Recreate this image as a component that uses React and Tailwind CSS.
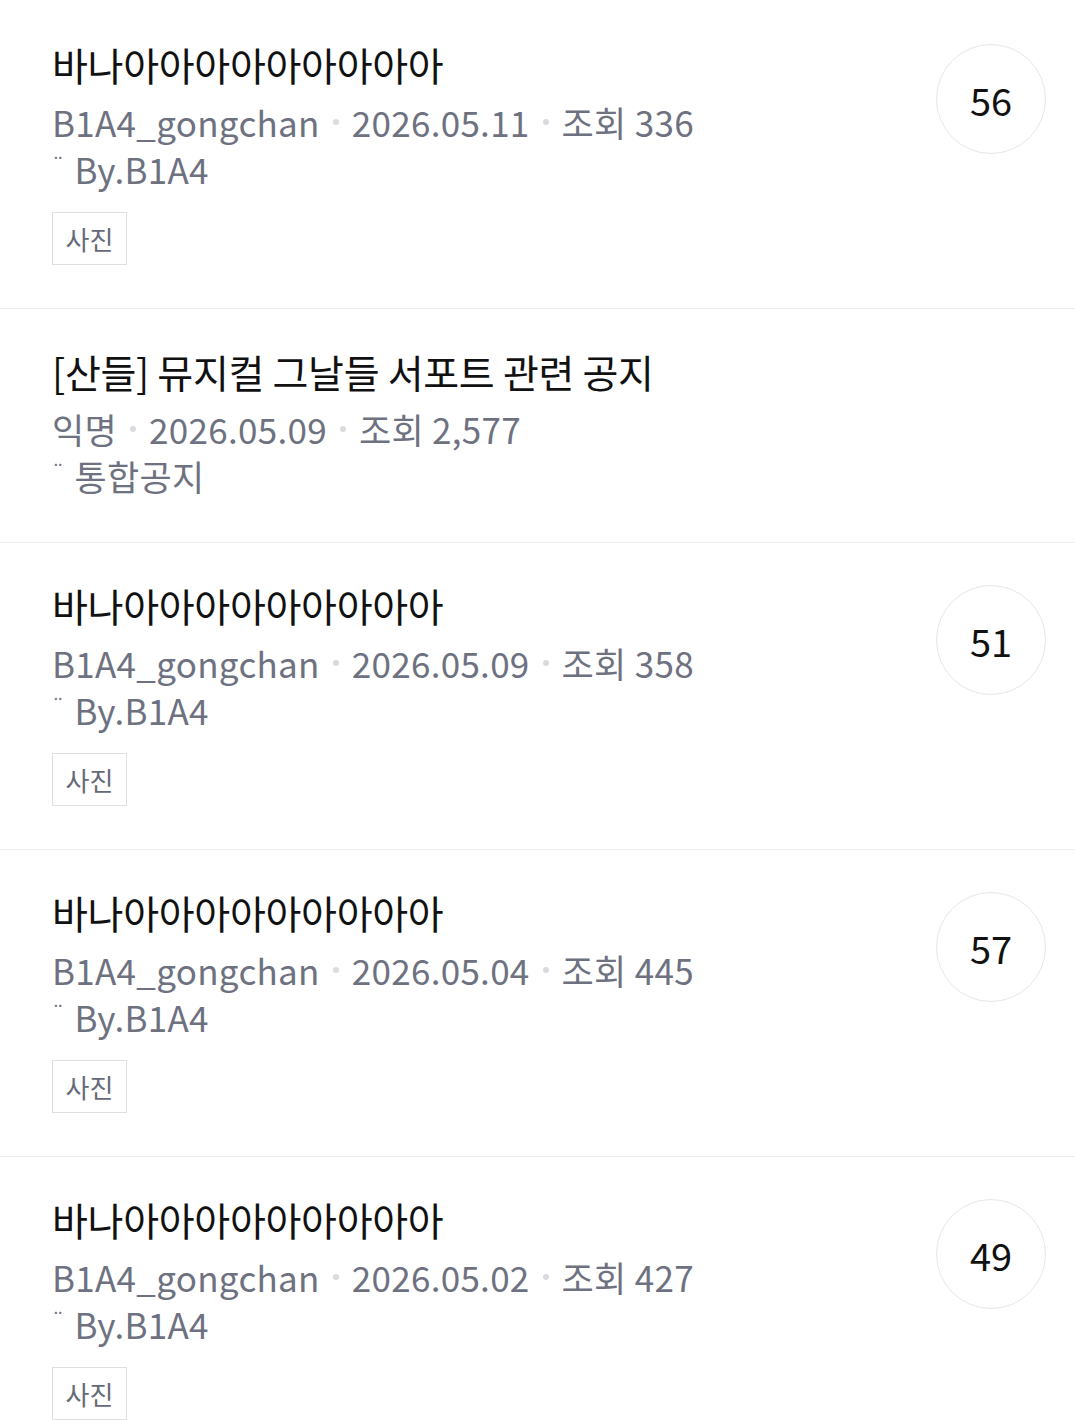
const posts = [
  { title: '바나아아아아아아아아아', author: 'B1A4_gongchan', date: '2026.05.11', views: '336', board: 'By.B1A4', tag: '사진', comments: 56 },
  { title: '[산들] 뮤지컬 그날들 서포트 관련 공지', author: '익명', date: '2026.05.09', views: '2,577', board: '통합공지' },
  { title: '바나아아아아아아아아아', author: 'B1A4_gongchan', date: '2026.05.09', views: '358', board: 'By.B1A4', tag: '사진', comments: 51 },
  { title: '바나아아아아아아아아아', author: 'B1A4_gongchan', date: '2026.05.04', views: '445', board: 'By.B1A4', tag: '사진', comments: 57 },
  { title: '바나아아아아아아아아아', author: 'B1A4_gongchan', date: '2026.05.02', views: '427', board: 'By.B1A4', tag: '사진', comments: 49 },
];

const Dot = () => <span className="mx-[13px] inline-block w-[6px] h-[6px] rounded-full bg-[#d9dbe0] align-middle" />;

export default function App() {
  return (
    <div className="bg-white w-[1075px] h-[1420px] overflow-hidden" style={{ fontFamily: '"Noto Sans CJK KR", "Noto Sans", sans-serif' }}>
      {posts.map((p, i) => (
        <div key={i} className={`flex items-start pl-[52px] pr-[29px] border-b border-[#ececee] ${i === 0 ? 'pt-[38px]' : 'pt-[36px]'} pb-[43px]`}>
          <div className="flex-1 min-w-0">
            <div className="text-[39px] leading-[52px] text-[#111111] tracking-[-0.3px]">{p.title}</div>
            <div className="mt-[8px] text-[35px] leading-[47px] text-[#6e7180] flex items-center tracking-[0.3px]">
              <span>{p.author}</span>
              <Dot />
              <span>{p.date}</span>
              <Dot />
              <span>조회 {p.views}</span>
            </div>
            <div className="text-[35px] leading-[47px] text-[#6e7180] flex items-start tracking-[0.3px]">
              <span className="text-[20px] leading-[38px] mr-[10px]">¨</span>
              <span>{p.board}</span>
            </div>
            {p.tag && (
              <div className="mt-[20px] inline-flex items-center justify-center w-[75px] h-[53px] border border-[#dedfe3] text-[26px] text-[#666a78]">
                {p.tag}
              </div>
            )}
          </div>
          {p.comments != null && (
            <div className="mt-[6px] w-[110px] h-[110px] rounded-full border border-[#e6e7ea] flex items-center justify-center text-[38px] text-[#111111]">
              {p.comments}
            </div>
          )}
        </div>
      ))}
    </div>
  );
}
